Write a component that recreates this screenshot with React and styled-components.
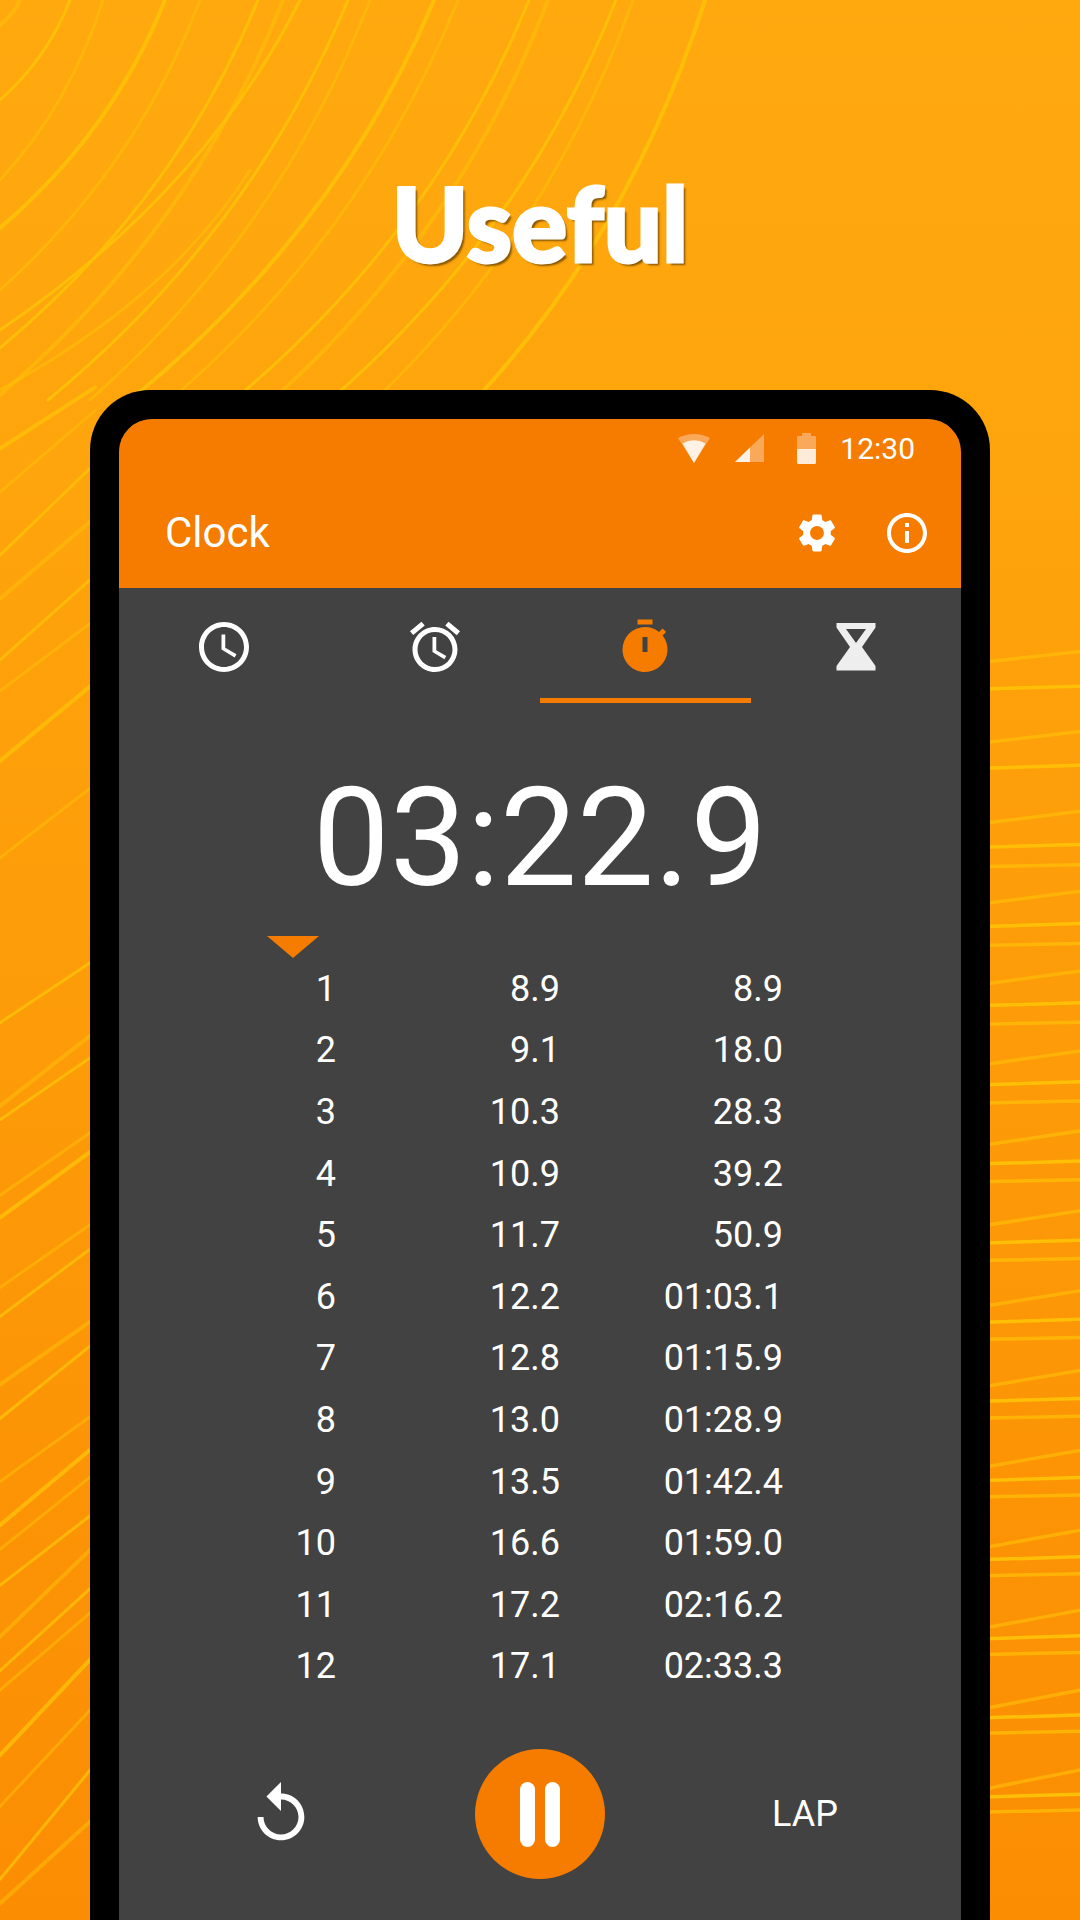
import React from 'react';
import styled, { createGlobalStyle } from 'styled-components';
import { MdAccessTime, MdAlarm, MdTimer, MdSettings, MdInfoOutline, MdReplay } from 'react-icons/md';

const GlobalStyle = createGlobalStyle`
  html, body {
    margin: 0;
    padding: 0;
    background: #fb8d03;
  }
`;

const Stage = styled.div`
  position: relative;
  width: 1080px;
  height: 1920px;
  overflow: hidden;
  background: linear-gradient(180deg, #ffa90f 0%, #fea40c 25%, #fb8d03 100%);
  font-family: Roboto, "Liberation Sans", sans-serif;
  color: #fff;
`;

const Streaks = styled.svg`
  position: absolute;
  left: 0;
  top: 0;
  pointer-events: none;
`;

const Header = styled.header`
  position: relative;
  height: 390px;
  padding-top: 167px;
  box-sizing: border-box;
  text-align: center;
`;

const Title = styled.h1`
  margin: 0;
  font-family: Lato, "Open Sans", sans-serif;
  font-weight: 900;
  font-size: 103px;
  line-height: 110px;
  color: #fff;
  -webkit-text-stroke: 3px #fff;
  text-shadow: 3px 3px 2px rgba(95, 60, 0, 0.75);
`;

const Phone = styled.div`
  position: relative;
  width: 900px;
  margin: 0 auto;
  height: 1560px;
  box-sizing: border-box;
  padding: 29px 29px 0;
  background: #000;
  border-radius: 60px 60px 0 0;
`;

const Screen = styled.div`
  height: 100%;
  background: #424242;
  border-radius: 33px 33px 0 0;
  overflow: hidden;
`;

const AppBar = styled.div`
  background: #f67c00;
  height: 169px;
`;

const StatusBar = styled.div`
  height: 58px;
  display: flex;
  align-items: center;
  justify-content: flex-end;
  gap: 24px;
  padding-right: 46px;
  font-size: 30px;
`;

const StatusIcon = styled.svg`
  display: block;
  flex: none;
  margin-right: ${(p) => p.$after || 0}px;
`;

const Toolbar = styled.div`
  height: 111px;
  display: flex;
  align-items: center;
  padding: 0 30px 0 46px;
`;

const AppTitle = styled.div`
  flex: 1;
  font-size: 42px;
`;

const ToolButton = styled.span`
  display: flex;
  margin-left: ${(p) => p.$gap || 0}px;
  font-size: ${(p) => p.$size}px;
`;

const Tabs = styled.div`
  display: grid;
  grid-template-columns: repeat(4, 1fr);
  height: 115px;
`;

const Tab = styled.div`
  display: flex;
  justify-content: center;
  padding-top: 29px;
  box-sizing: border-box;
  font-size: 60px;
  color: ${(p) => (p.$active ? '#f67c00' : '#fff')};
  border-bottom: 5px solid ${(p) => (p.$active ? '#f67c00' : 'transparent')};
  svg {
    display: block;
  }
`;

const Elapsed = styled.div`
  padding: 66px 0 29px;
  font-size: 137px;
  line-height: 138px;
  text-align: center;
`;

const Marker = styled.div`
  width: 0;
  height: 0;
  margin-left: 148px;
  border-left: 26px solid transparent;
  border-right: 26px solid transparent;
  border-top: 22px solid #f67c00;
`;

const Laps = styled.div`
  display: flex;
  flex-direction: column;
`;

const LapRow = styled.div`
  display: grid;
  grid-template-columns: 217px 224px 223px;
  height: 61.6px;
  align-items: center;
  font-size: 36px;
  text-align: right;
`;

const Controls = styled.div`
  display: flex;
  align-items: center;
  margin-top: 52px;
  padding-left: 127px;
`;

const ResetButton = styled.span`
  display: flex;
  font-size: 70px;
`;

const PauseButton = styled.div`
  width: 130px;
  height: 130px;
  margin-left: 159px;
  border-radius: 50%;
  background: #f67c00;
  display: flex;
  align-items: center;
  justify-content: center;
  gap: 10px;
`;

const PauseBar = styled.span`
  width: 15px;
  height: 65px;
  border-radius: 8px;
  background: #fff;
`;

const LapButton = styled.div`
  margin-left: 167px;
  font-size: 36px;
`;

const laps = [
  ['1', '8.9', '8.9'],
  ['2', '9.1', '18.0'],
  ['3', '10.3', '28.3'],
  ['4', '10.9', '39.2'],
  ['5', '11.7', '50.9'],
  ['6', '12.2', '01:03.1'],
  ['7', '12.8', '01:15.9'],
  ['8', '13.0', '01:28.9'],
  ['9', '13.5', '01:42.4'],
  ['10', '16.6', '01:59.0'],
  ['11', '17.2', '02:16.2'],
  ['12', '17.1', '02:33.3'],
];

// streaks that run from the top edge down to y=400 or to the left edge
const topStreaks = [
  [705, 0, 475, 400], [633, 0, 375, 400], [616, 0, 330, 400], [548, 0, 272, 400],
  [529, 0, 234, 400], [458, 0, 170, 400], [434, 0, 130, 400], [370, 0, 90, 400],
  [348, 0, 48, 400], [283, 0, 0, 395], [258, 0, 0, 348], [200, 0, 0, 290],
  [165, 0, 0, 228], [103, 0, 0, 180], [70, 0, 0, 100], [20, 0, 0, 25],
  [300, 0, 0, 330], [250, 170, 0, 390],
];

// left of the phone: y at x=0 and y at x=90, as read from the picture
const leftStreaks = [
  [50, -10], [95, 15], [160, 70], [205, 125], [268, 185], [300, 230], [372, 295], [472, 400],
  [642, 580], [728, 655], [742, 678], [820, 755], [843, 775], [915, 850], [945, 875],
  [1015, 950], [1050, 975], [1115, 1048], [1160, 1082], [1185, 1110], [1222, 1150],
  [1275, 1185], [1310, 1225], [1330, 1250], [1397, 1298], [1450, 1350], [1525, 1412], [1550, 1465],
];

const buildRightStreaks = () => {
  const out = [];
  for (let i = 0; i < 15; i++) {
    const y = 662 + 80.5 * i;
    const t = i / 14;
    out.push([y, y - 11 - t * 9, 0.6]);
    out.push([y + 27 - t * 19, y + 24 - t * 19, 0.95]);
    if (i > 1) out.push([y + 47 - t * 24, y + 45 - t * 24, 0.7]);
  }
  return out;
};

const Background = () => (
  <Streaks width="1080" height="1920" viewBox="0 0 1080 1920" fill="none" stroke="#ffc107" strokeLinecap="round">
    {topStreaks.map(([x1, y1, x2, y2], i) => {
      const cx = x1 - (x1 - x2) * 0.32;
      const cy = y1 + (y2 - y1) * 0.58;
      return (
        <path
          key={i}
          d={`M${x1} ${y1}Q${cx} ${cy} ${x2} ${y2}`}
          strokeWidth={i % 3 === 0 ? 4 : 3}
          opacity={i % 2 === 0 ? 0.9 : 0.55}
        />
      );
    })}
    {leftStreaks.map(([a, b], i) => (
      <path
        key={i}
        d={`M0 ${400 + a * 0.97}L95 ${400 + (b - (a - b) * 0.05) * 0.97}`}
        strokeWidth={i % 3 === 0 ? 4 : 3}
        opacity={i % 2 === 0 ? 0.8 : 0.5}
      />
    ))}
    {buildRightStreaks().map(([a, b, o], i) => (
      <path key={i} d={`M985 ${a}L1085 ${b}`} strokeWidth={3.5} opacity={o} />
    ))}
  </Streaks>
);

const WifiIcon = () => (
  <StatusIcon width="32" height="29" viewBox="0 0 32 29" $after={1}>
    <path d="M0 4Q16 -4 32 4L16 29Z" fill="#fff" opacity="0.35" />
    <path d="M4.5 9.5Q16 3 27.5 9.5L16 29Z" fill="#fff" opacity="0.85" />
  </StatusIcon>
);

const SignalIcon = () => (
  <StatusIcon width="29" height="28" viewBox="0 0 29 28" $after={9}>
    <path d="M0 28L29 0V28Z" fill="#fff" opacity="0.35" />
    <path d="M0 28L15 13.5V28Z" fill="#fff" opacity="0.85" />
  </StatusIcon>
);

const BatteryIcon = () => (
  <StatusIcon width="19" height="31" viewBox="0 0 19 31">
    <path d="M5 0H14V3H18Q19 3 19 4V16H0V4Q0 3 1 3H5Z" fill="#fff" opacity="0.35" />
    <path d="M0 16H19V29.5Q19 31 17.5 31H1.5Q0 31 0 29.5Z" fill="#fff" opacity="0.85" />
  </StatusIcon>
);

const HourglassIcon = () => (
  <svg width="60" height="60" viewBox="0 0 60 60" fill="#eee">
    <path
      fillRule="evenodd"
      d="M10.5 6H49.5V10.5L36 30L49.5 49V53.5H10.5V49L24 30L10.5 10.5ZM20 12L30 26L40 12Z"
    />
  </svg>
);

const App = () => {
  return (
    <Stage>
      <GlobalStyle />
      <Background />
      <Header>
        <Title>Useful</Title>
      </Header>
      <Phone>
        <Screen>
          <AppBar>
            <StatusBar>
              <WifiIcon />
              <SignalIcon />
              <BatteryIcon />
              <span>12:30</span>
            </StatusBar>
            <Toolbar>
              <AppTitle>Clock</AppTitle>
              <ToolButton $size={46}><MdSettings /></ToolButton>
              <ToolButton $size={48} $gap={43}><MdInfoOutline /></ToolButton>
            </Toolbar>
          </AppBar>
          <Tabs>
            <Tab><MdAccessTime /></Tab>
            <Tab><MdAlarm /></Tab>
            <Tab $active><MdTimer /></Tab>
            <Tab><HourglassIcon /></Tab>
          </Tabs>
          <Elapsed>03:22.9</Elapsed>
          <Marker />
          <Laps>
            {laps.map((lap) => (
              <LapRow key={lap[0]}>
                <span>{lap[0]}</span>
                <span>{lap[1]}</span>
                <span>{lap[2]}</span>
              </LapRow>
            ))}
          </Laps>
          <Controls>
            <ResetButton><MdReplay /></ResetButton>
            <PauseButton>
              <PauseBar />
              <PauseBar />
            </PauseButton>
            <LapButton>LAP</LapButton>
          </Controls>
        </Screen>
      </Phone>
    </Stage>
  );
};

export default App;
